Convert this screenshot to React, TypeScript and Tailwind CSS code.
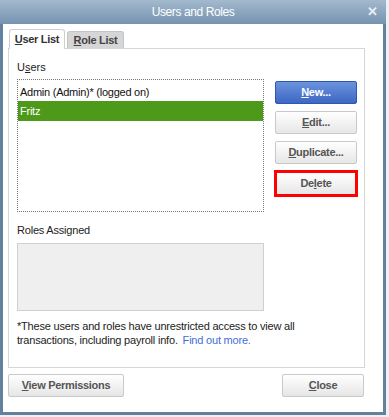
import React from "react";

const font = { fontFamily: '"Liberation Sans", Arial, sans-serif' };

function Btn({ children, w = "w-[82px]" }: { children: React.ReactNode; w?: string }) {
  return (
    <div
      className={`${w} h-[23px] flex items-center justify-center rounded-[2px] border border-[#c9c9c9] bg-gradient-to-b from-[#ffffff] to-[#e6e6e6] text-[11px] font-bold text-[#555] tracking-[-0.3px]`}
    >
      {children}
    </div>
  );
}

export default function App() {
  return (
    <div
      className="w-[389px] h-[417px] overflow-hidden bg-[#eef0f2] relative"
      style={font}
    >
      <div className="w-[386px] h-[415px] flex flex-col bg-[#62819e]">
        {/* title bar */}
        <div className="h-[24px] shrink-0 relative flex items-center justify-center bg-gradient-to-b from-[#a3b9cd] to-[#7593b0]">
          <span className="text-[12px] text-white tracking-[-0.4px]">Users and Roles</span>
          <span className="absolute right-[8px] top-[5px] text-[13px] font-bold text-[#e8eef4] leading-none">
            ✕
          </span>
        </div>
        {/* body */}
        <div className="flex-1 mx-[3px] mb-[3px] bg-white flex flex-col pl-[5px] pr-[19px]">
          {/* tabs */}
          <div className="flex items-end mt-[5px] ml-[1px] h-[19px]">
            <div className="h-[20px] w-[56px] -mb-px relative z-10 flex items-center justify-center rounded-t-[3px] border border-b-0 border-[#cfcfcf] bg-white text-[11px] font-bold text-[#333] tracking-[-0.3px]">
              <span>
                <span className="underline">U</span>ser List
              </span>
            </div>
            <div className="h-[17px] w-[57px] ml-[2px] flex items-center justify-center rounded-t-[3px] border border-b-0 border-[#c4c4c4] bg-[#d6d6d6] text-[11px] font-bold text-[#444] tracking-[-0.3px]">
              <span>
                <span className="underline">R</span>ole List
              </span>
            </div>
          </div>
          {/* panel */}
          <div className="w-[357px] h-[320px] border border-[#d6d6d6] flex flex-col pl-[8px] pt-[10px]">
            <div className="flex">
              <div className="w-[247px] flex flex-col">
                <div className="h-[16px] text-[11px] leading-[16px] text-[#222]">
                  U<span className="underline">s</span>ers
                </div>
                <div className="mt-[4px] h-[133px] border border-dotted border-[#777] flex flex-col pt-[3px] text-[11px] tracking-[-0.25px]">
                  <div className="h-[18px] px-[2px] flex items-center text-[#111]">
                    Admin (Admin)* (logged on)
                  </div>
                  <div className="h-[20px] px-[2px] flex items-center bg-[#4d9a1b] text-white">
                    Fritz
                  </div>
                </div>
                <div className="mt-[10px] h-[16px] text-[11px] leading-[16px] text-[#222] tracking-[-0.2px]">
                  Roles Assigned
                </div>
                <div className="mt-[5px] h-[68px] border border-[#cfcfcf] bg-[#efefef]" />
              </div>
              <div className="ml-[11px] pt-[22px] flex flex-col gap-[7px]">
                <div className="w-[82px] h-[23px] flex items-center justify-center rounded-[2px] border border-[#2d57b0] bg-gradient-to-b from-[#6b93de] to-[#3d67c2] text-[11px] font-bold text-white tracking-[-0.3px]">
                  <span>
                    <span className="underline">N</span>ew...
                  </span>
                </div>
                <Btn>
                  <span>
                    <span className="underline">E</span>dit...
                  </span>
                </Btn>
                <Btn>
                  <span>
                    <span className="underline">D</span>uplicate...
                  </span>
                </Btn>
                <div className="-ml-[1px] -mt-[1px] w-[84px] h-[27px] border-[3px] border-[#ff0000] flex items-center justify-center bg-gradient-to-b from-[#ffffff] to-[#e6e6e6] text-[11px] font-bold text-[#555] tracking-[-0.3px]">
                  <span>
                    De<span className="underline">l</span>ete
                  </span>
                </div>
              </div>
            </div>
            <div className="mt-[8px] text-[11px] leading-[14px] text-[#222] tracking-[-0.2px]">
              *These users and roles have unrestricted access to view all
              <br />
              transactions, including payroll info.{" "}
              <span className="text-[#3f6fd6] ml-[2px]">Find out more.</span>
            </div>
          </div>
          {/* bottom buttons */}
          <div className="mt-[6px] flex justify-between">
            <Btn w="w-[116px]">
              <span>
                <span className="underline">V</span>iew Permissions
              </span>
            </Btn>
            <Btn>
              <span>
                <span className="underline">C</span>lose
              </span>
            </Btn>
          </div>
        </div>
      </div>
    </div>
  );
}
